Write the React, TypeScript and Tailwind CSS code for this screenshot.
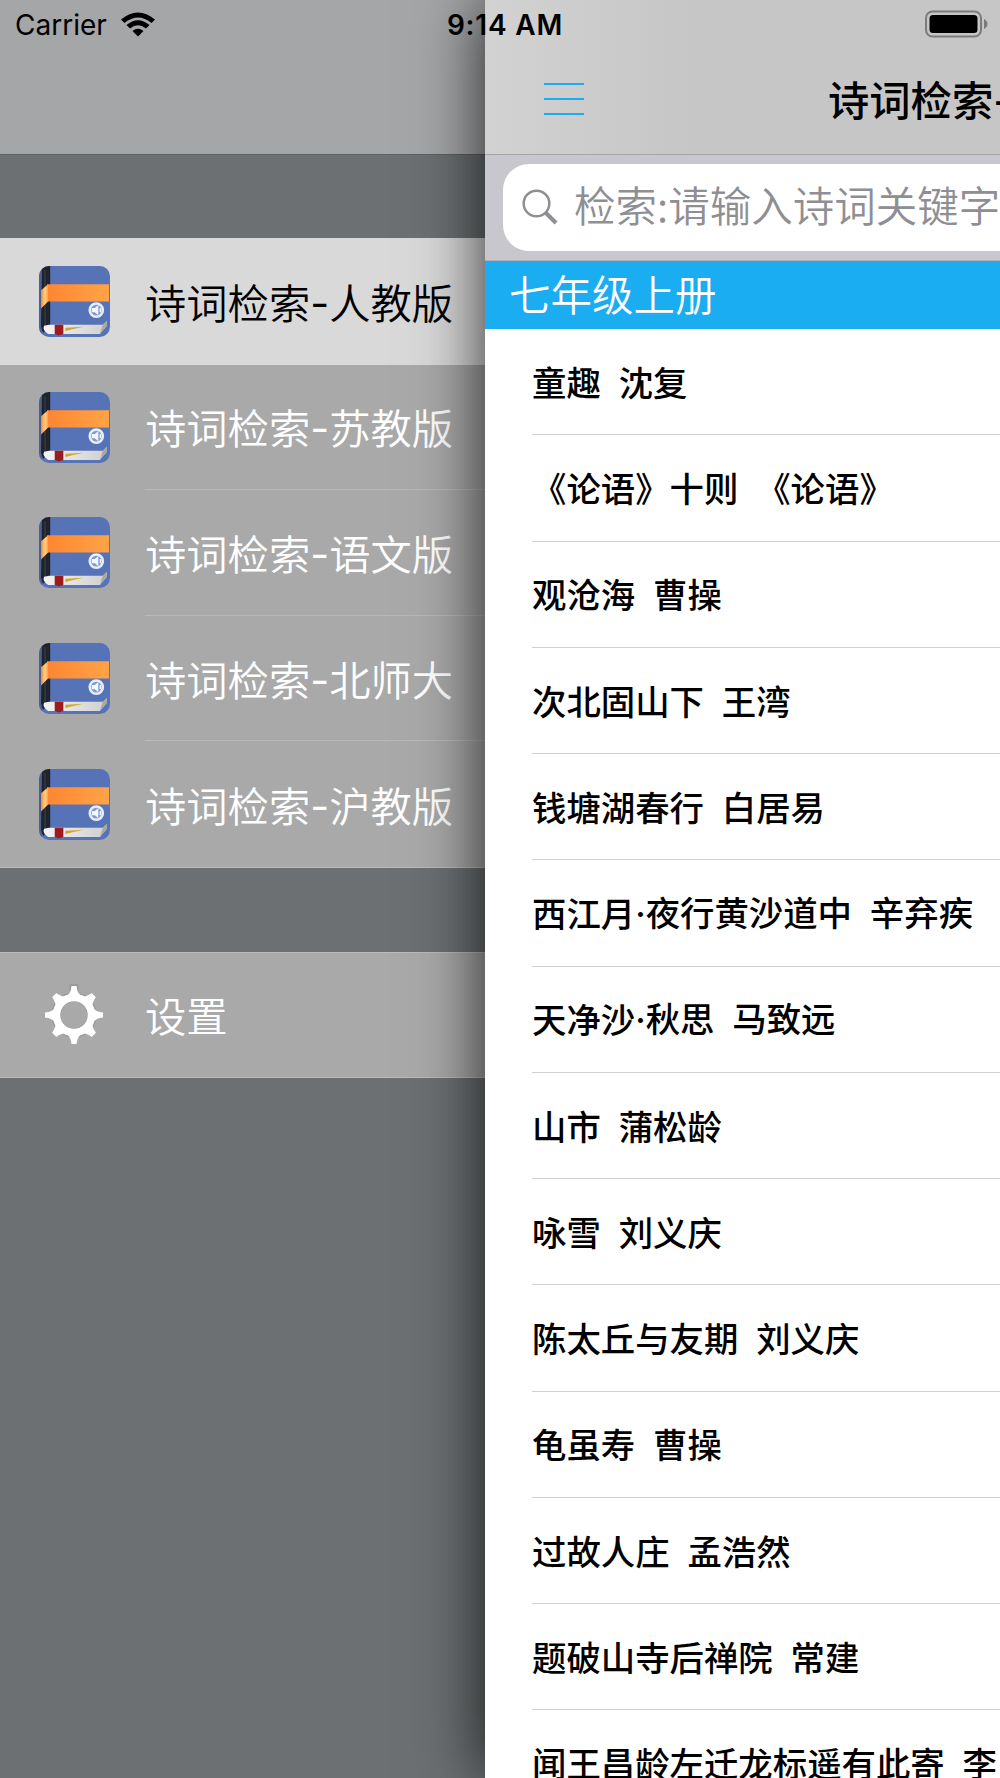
const sources = ["人教版", "苏教版", "语文版", "北师大", "沪教版"];

const poems = [
  "童趣  沈复",
  "《论语》十则  《论语》",
  "观沧海  曹操",
  "次北固山下  王湾",
  "钱塘湖春行  白居易",
  "西江月·夜行黄沙道中  辛弃疾",
  "天净沙·秋思  马致远",
  "山市  蒲松龄",
  "咏雪  刘义庆",
  "陈太丘与友期  刘义庆",
  "龟虽寿  曹操",
  "过故人庄  孟浩然",
  "题破山寺后禅院  常建",
  "闻王昌龄左迁龙标遥有此寄  李白",
];

function BookIcon() {
  return (
    <svg width="71" height="71" viewBox="0 0 70 70" className="shrink-0">
      <defs>
        <clipPath id="book">
          <rect width="70" height="70" rx="10" />
        </clipPath>
        <linearGradient id="band" x1="0" x2="1">
          <stop offset="0" stopColor="#ff8630" />
          <stop offset="1" stopColor="#ffa347" />
        </linearGradient>
        <linearGradient id="fold" x1="0" x2="1">
          <stop offset="0" stopColor="#f58a3c" />
          <stop offset="0.6" stopColor="#ffd487" />
          <stop offset="1" stopColor="#ff9a3f" />
        </linearGradient>
        <linearGradient id="pages" x1="0" x2="1">
          <stop offset="0" stopColor="#f4f4f4" />
          <stop offset="1" stopColor="#cfcfcf" />
        </linearGradient>
      </defs>
      <g clipPath="url(#book)">
        <rect width="70" height="70" fill="#5673b8" />
        <rect width="3" height="70" fill="#4a5f92" />
        <path d="M3 0H11V58L4 66L2 60Z" fill="#20242a" />
        <path d="M6 4V62" stroke="#343a42" strokeWidth="1.5" />
        <path d="M10 58H63L67 54V59L60 67H9Q3 63 5 59Z" fill="url(#pages)" />
        <path d="M63 58L67 54V59L60 67Z" fill="#aaa99f" />
        <path d="M26 61L44 60L34 62L26 64Z" fill="#d4a72c" />
        <path d="M15.500 58H24V67L19.500 68.500L15.500 67Z" fill="#9c1b1f" />
        <rect x="8" y="18" width="61" height="17" fill="url(#band)" />
        <path d="M9 18L2 24V42L9 35Z" fill="url(#fold)" />
      </g>
      <circle cx="56.500" cy="43.500" r="6.500" fill="#7f97cd" stroke="#e6eefa" strokeWidth="2.500" />
      <path d="M52 41.500H55L58.500 38.500V48.500L55 45.500H52Z" fill="#f2f6fd" />
      <path d="M60.500 41.500V45.500" stroke="#f2f6fd" strokeWidth="1.500" />
    </svg>
  );
}

function GearIcon() {
  return (
    <svg width="70" height="70" viewBox="-35 -35 70 70" className="shrink-0">
      <g fill="none" stroke="#808080" strokeOpacity="0.35">
        <circle r="18" strokeWidth="9.500" />
        <path d="M0 -31V-20" strokeWidth="9" />
        <path d="M0 -28V-20" strokeWidth="8" transform="rotate(45)" />
        <path d="M0 -28V-20" strokeWidth="8" transform="rotate(-45)" />
      </g>
      <circle r="17.500" fill="none" stroke="#fff" strokeWidth="7.500" />
      <g fill="#fff">
        <path d="M-9 -18Q-3 -21 -2.500 -29H2.500Q3 -21 9 -18Z" />
        <path d="M-9 -18Q-3 -21 -2.500 -29H2.500Q3 -21 9 -18Z" transform="rotate(90)" />
        <path d="M-9 -18Q-3 -21 -2.500 -29H2.500Q3 -21 9 -18Z" transform="rotate(180)" />
        <path d="M-9 -18Q-3 -21 -2.500 -29H2.500Q3 -21 9 -18Z" transform="rotate(270)" />
        <path d="M-8 -18Q-4 -21 -3 -28H3Q4 -21 8 -18Z" transform="rotate(45)" />
        <path d="M-8 -18Q-4 -21 -3 -28H3Q4 -21 8 -18Z" transform="rotate(135)" />
        <path d="M-8 -18Q-4 -21 -3 -28H3Q4 -21 8 -18Z" transform="rotate(225)" />
        <path d="M-8 -18Q-4 -21 -3 -28H3Q4 -21 8 -18Z" transform="rotate(315)" />
      </g>
    </svg>
  );
}

function StatusBar() {
  return (
    <div className="absolute inset-x-0 top-0 z-20 grid h-[50px] grid-cols-3 items-center pl-[15px] pr-[12px] font-['Inter',sans-serif] text-[28px] leading-none">
      <div className="flex items-center gap-[14px]">
        <span className="w-[92px] whitespace-nowrap font-normal">Carrier</span>
        <svg width="34" height="25" viewBox="0 0 34 25" className="-mt-[2px]">
          <path d="M0 7.500Q17 -6.500 34 7.500L30.500 11Q17 0 3.500 11Z" />
          <path d="M5.500 13Q17 3.500 28.500 13L25 16.500Q17 10 9 16.500Z" />
          <path d="M11.500 19Q17 14.500 22.500 19L17 24.500Z" />
        </svg>
      </div>
      <span className="whitespace-nowrap pl-[7px] text-center font-semibold tracking-[0.8px]">9:14 AM</span>
      <svg width="63" height="28" viewBox="0 0 63 28" className="-mt-[2px] justify-self-end">
        <rect x="1" y="1.500" width="55" height="25" rx="6.500" fill="none" stroke="#7b7b7b" strokeWidth="2" />
        <rect x="4.500" y="5" width="48" height="18" rx="3.500" />
        <path d="M59 9Q62.500 11 62.500 14T59 19Z" fill="#7b7b7b" />
      </svg>
    </div>
  );
}

export default function App() {
  return (
    <div className="relative flex h-[1778px] w-[1000px] overflow-hidden bg-[#6c7072] font-['Noto_Sans_CJK_SC',sans-serif] font-[350] text-black">
      <StatusBar />

      {/* Side menu */}
      <aside className="flex w-[485px] shrink-0 flex-col">
        <div className="h-[155px] border-b border-[#5d6062] bg-[#a5a6a8]" />
        <ul className="mt-[83px] flex flex-col border-b border-[#bcbcbc] bg-[#a9a9a9] text-[41.3px] text-white">
          {sources.map((name, i) => (
            <li
              key={name}
              className={
                i === 0
                  ? "flex h-[126.500px] items-center bg-[#d9d9d9] pl-[38.500px] text-black"
                  : "flex h-[125.600px] items-center pl-[38.500px]"
              }
            >
              <BookIcon />
              <div
                className={
                  i === 0 || i === 4
                    ? "ml-[35.500px] flex h-full flex-1 items-center whitespace-nowrap pt-[1px]"
                    : "ml-[35.500px] flex h-full flex-1 items-center whitespace-nowrap border-b-[1.5px] border-[#b8b8b8] pt-[1px]"
                }
              >
                诗词检索<span className="mt-[4px] font-['Inter',sans-serif] font-normal">-</span>{name}
              </div>
            </li>
          ))}
        </ul>
        <div className="mt-[84px] flex h-[126px] items-center border-y border-[#bcbcbc] bg-[#a9a9a9] pl-[39px] text-[41.3px] text-white">
          <GearIcon />
          <span className="ml-[36px]">设置</span>
        </div>
      </aside>

      {/* Poem list, slid over to the right */}
      <main className="z-10 flex w-[515px] shrink-0 flex-col bg-white shadow-[0_0_64px_rgba(0,0,0,0.8)]">
        <header className="flex h-[155px] shrink-0 items-end overflow-hidden border-b border-[#a5a5a7] bg-linear-to-r from-[#d2d2d2] to-[#c6c6c6] to-40% pl-[59px]">
          <div className="mb-[39px] flex w-[40px] shrink-0 flex-col gap-[13px]">
            <span className="h-[2px] bg-[#1badf2]" />
            <span className="h-[2px] bg-[#1badf2]" />
            <span className="h-[2px] bg-[#1badf2]" />
          </div>
          <h1 className="mb-[21px] ml-[244px] whitespace-nowrap text-[41.3px] font-medium">
            诗词检索<span className="font-['Inter',sans-serif]">-</span>人教版
          </h1>
        </header>

        <div className="flex h-[106px] shrink-0 items-center overflow-hidden border-b border-[#b2b1b7] bg-[#c8c7cd] pl-[18px]">
          <div className="flex h-[87px] w-[520px] shrink-0 items-center rounded-l-[26px] bg-white pl-[19px] text-[41.5px] text-[#8e8e93]">
            <svg width="37" height="37" viewBox="0 0 37 37" className="shrink-0" fill="none" stroke="#8e8e93">
              <circle cx="14.500" cy="14.500" r="12.800" strokeWidth="2.500" />
              <path d="M23.500 23.500L34 34" strokeWidth="4" />
            </svg>
            <span className="ml-[15px] whitespace-nowrap pb-[6px]">检索:请输入诗词关键字</span>
          </div>
        </div>

        <h2 className="flex h-[68px] shrink-0 items-center bg-[#1badf2] pb-[3px] pl-[24px] text-[41.5px] text-white">
          七年级上册
        </h2>

        <ul className="flex flex-col pl-[47px] text-[34.4px] font-medium [word-spacing:1.2px]">
          {poems.map((poem) => (
            <li
              key={poem}
              className="flex h-[106.28px] items-center overflow-hidden whitespace-pre border-b border-[#d0cfd3]"
            >
              {poem.split("·").map((part, i) => (
                <span key={part}>
                  {i > 0 && <span className="font-['Inter',sans-serif]">·</span>}
                  {part}
                </span>
              ))}
            </li>
          ))}
        </ul>
      </main>
    </div>
  );
}
